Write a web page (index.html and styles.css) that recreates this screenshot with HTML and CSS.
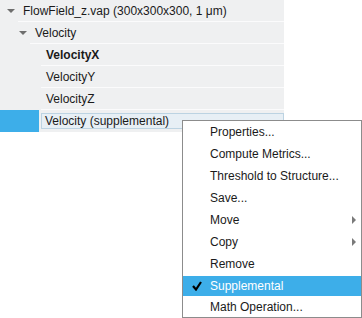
FILE: index.html
```html
<!DOCTYPE html>
<html lang="en">

<head>
    <meta charset="UTF-8">
    <title>Data Tree</title>
    <link rel="stylesheet" href="styles.css">
</head>

<body>
    <div class="tree">
        <div class="row">
            <div class="branch lvl0"><span class="arrow"></span></div>
            <div class="cell">FlowField_z.vap (300x300x300, 1 μm)</div>
        </div>
        <div class="row">
            <div class="branch lvl1"><span class="arrow"></span></div>
            <div class="cell">Velocity</div>
        </div>
        <div class="row">
            <div class="branch lvl2"></div>
            <div class="cell bold">VelocityX</div>
        </div>
        <div class="row">
            <div class="branch lvl2"></div>
            <div class="cell">VelocityY</div>
        </div>
        <div class="row">
            <div class="branch lvl2"></div>
            <div class="cell">VelocityZ</div>
        </div>
        <div class="row selected">
            <div class="branch lvl2"></div>
            <div class="cell">Velocity (supplemental)</div>
        </div>
    </div>

    <!-- context menu -->
    <div class="menu">
        <div class="menu-item">Properties...</div>
        <div class="menu-item">Compute Metrics...</div>
        <div class="menu-item">Threshold to Structure...</div>
        <div class="menu-item">Save...</div>
        <div class="menu-item sub">Move</div>
        <div class="menu-item sub">Copy</div>
        <div class="menu-item">Remove</div>
        <div class="menu-item active">
            <svg class="check" width="10" height="10" viewBox="0 0 10 10">
                <polyline points="1,5 4,8.5 9,1" fill="none" stroke="#000" stroke-width="2.2" />
            </svg>
            Supplemental
        </div>
        <div class="menu-item">Math Operation...</div>
    </div>
</body>

</html>
```

FILE: styles.css
```css
body {
    margin: 0;
    font-family: "Liberation Sans", Arial, sans-serif;
    font-size: 12px;
    color: #1a1a1a;
    background-color: #fff;
}

.tree {
    width: 284px;
    background-color: #eff0f1;
}

.row {
    display: flex;
    height: 22px;
}

.branch {
    display: flex;
    align-items: center;
    justify-content: flex-end;
    flex-shrink: 0;
}

.lvl0 {
    width: 18px;
}

.lvl1 {
    width: 30px;
}

.lvl2 {
    width: 41px;
}

.arrow {
    width: 0;
    height: 0;
    margin-right: 3px;
    border-left: 4px solid transparent;
    border-right: 4px solid transparent;
    border-top: 4px solid #6e6e6e;
}

.cell {
    flex: 1;
    display: flex;
    align-items: center;
    padding-left: 5px;
    border-bottom: 1px solid #fbfbfc;
    white-space: nowrap;
}

.bold {
    font-weight: bold;
}

.selected .branch {
    width: 39px;
    margin-right: 2px;
    background-color: #3daee9;
}

.selected .cell {
    margin: 3px 0 3px;
    padding-left: 3px;
    border: 1px solid #bcd3e2;
    background-color: #e7eff5;
}

.menu {
    position: absolute;
    left: 182px;
    top: 120px;
    width: 178px;
    background-color: #fff;
    border: 1px solid #8c8c8c;
}

.menu-item {
    position: relative;
    height: 22px;
    line-height: 22px;
    padding-left: 27px;
    white-space: nowrap;
}

.menu-item:last-child {
    height: 20px;
    line-height: 20px;
}

.sub::after {
    content: "";
    position: absolute;
    right: 5px;
    top: 7px;
    border-top: 4px solid transparent;
    border-bottom: 4px solid transparent;
    border-left: 4px solid #7a7a7a;
}

.active {
    color: #fff;
    background-color: #3daee9;
    height: 20px;
    line-height: 20px;
    margin: 1px 0;
}

.check {
    position: absolute;
    left: 9px;
    top: 5px;
}
```
